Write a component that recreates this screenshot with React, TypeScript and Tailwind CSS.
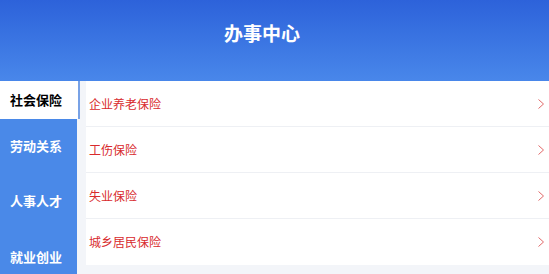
import React from "react";

const tabs = [
  { label: "社会保险", h: "h-[38px]" },
  { label: "劳动关系", h: "h-[54px]" },
  { label: "人事人才", h: "h-[56px]" },
  { label: "就业创业", h: "h-[56px]" },
];

const items = ["企业养老保险", "工伤保险", "失业保险", "城乡居民保险"];

function Chevron() {
  return (
    <svg width="8" height="12" viewBox="0 0 8 12" fill="none">
      <polyline points="1.5,1.5 6.5,6 1.5,10.5" stroke="#e26a6a" strokeWidth="1" />
    </svg>
  );
}

export default function App() {
  return (
    <div
      className="w-[549px] h-[274px] overflow-hidden bg-[#f3f5f9] flex flex-col"
      style={{ fontFamily: '"Noto Sans CJK SC", "Noto Sans", sans-serif' }}
    >
      <div className="h-[81px] shrink-0 bg-gradient-to-b from-[#2d62da] to-[#4987ea] flex justify-center pt-[19px] pr-[25px]">
        <span className="text-white text-[19px] font-bold leading-[28px]">办事中心</span>
      </div>
      <div className="flex flex-1 min-h-0 overflow-hidden">
        <div className="w-[80px] shrink-0 flex flex-col">
          {tabs.map((t, i) =>
            i === 0 ? (
              <div
                key={t.label}
                className={`${t.h} shrink-0 w-[80px] bg-white border-r-2 border-[#78a2e6] flex items-center pl-[10px] text-[13px] font-bold text-black`}
              >
                {t.label}
              </div>
            ) : (
              <div
                key={t.label}
                className={`${t.h} shrink-0 w-[77px] bg-[#4a89e8] flex items-center pl-[10px] text-[13px] font-bold text-white`}
              >
                {t.label}
              </div>
            )
          )}
          <div className="flex-1 w-[77px] bg-[#4a89e8]" />
        </div>
        <div className="flex-1 pl-[6px]">
          <div className="bg-white">
            {items.map((it, i) => (
              <div
                key={it}
                className={`h-[46px] flex items-center justify-between pl-[3px] pr-[4px] ${i < items.length - 1 ? "border-b border-[#eef0f4]" : ""}`}
              >
                <span className="text-[12px] text-[#d82a2d]">{it}</span>
                <Chevron />
              </div>
            ))}
          </div>
        </div>
      </div>
    </div>
  );
}
